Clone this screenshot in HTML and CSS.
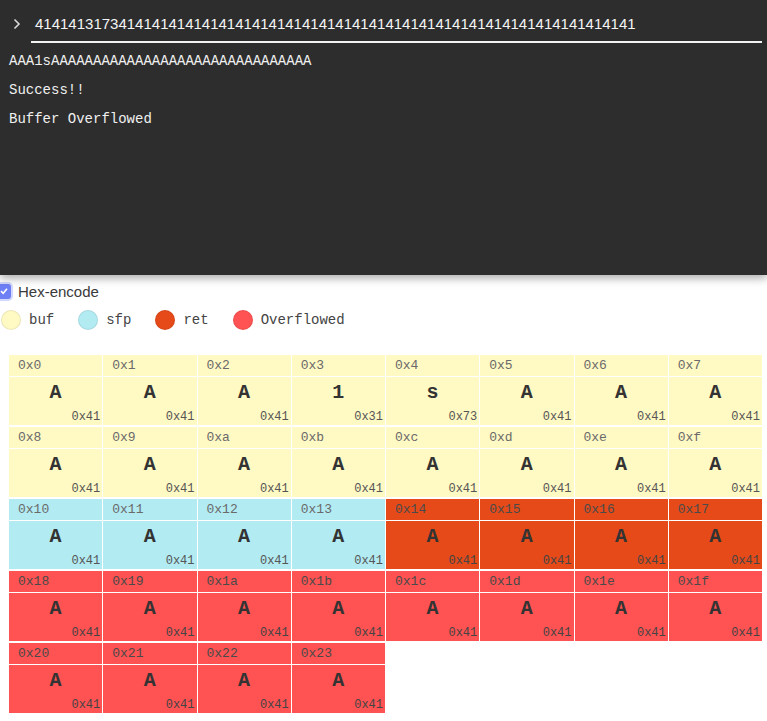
FILE: index.html
```html
<!DOCTYPE html>
<html>
<head>
<meta charset="utf-8">
<link rel="stylesheet" href="styles.css">
</head>
<body>
<div class="terminal">
  <div class="prompt">
    <svg class="chev" width="8" height="12" viewBox="0 0 8 12"><path d="M1.5 1.5 L6 6 L1.5 10.5" fill="none" stroke="#d8d8d8" stroke-width="1.6"/></svg>
    <div class="input">414141317341414141414141414141414141414141414141414141414141414141414141</div>
  </div>
  <p class="out">AAA1sAAAAAAAAAAAAAAAAAAAAAAAAAAAAAAA</p>
  <p class="out">Success!!</p>
  <p class="out">Buffer Overflowed</p>
</div>

<label class="hexrow">
  <span class="check"><svg width="10" height="10" viewBox="0 0 10 10"><path d="M2 5.2 L4.2 7.3 L8 2.8" fill="none" stroke="#fff" stroke-width="1.6"/></svg></span>
  <span class="hexlabel">Hex-encode</span>
</label>

<div class="legend">
  <span class="item"><span class="dot buf"></span>buf</span>
  <span class="item"><span class="dot sfp"></span>sfp</span>
  <span class="item"><span class="dot ret"></span>ret</span>
  <span class="item"><span class="dot ovf"></span>Overflowed</span>
</div>

<div class="grid">
  <div class="cell buf"><div class="addr">0x0</div><div class="val"><span class="ch">A</span><span class="hex">0x41</span></div></div>
  <div class="cell buf"><div class="addr">0x1</div><div class="val"><span class="ch">A</span><span class="hex">0x41</span></div></div>
  <div class="cell buf"><div class="addr">0x2</div><div class="val"><span class="ch">A</span><span class="hex">0x41</span></div></div>
  <div class="cell buf"><div class="addr">0x3</div><div class="val"><span class="ch">1</span><span class="hex">0x31</span></div></div>
  <div class="cell buf"><div class="addr">0x4</div><div class="val"><span class="ch">s</span><span class="hex">0x73</span></div></div>
  <div class="cell buf"><div class="addr">0x5</div><div class="val"><span class="ch">A</span><span class="hex">0x41</span></div></div>
  <div class="cell buf"><div class="addr">0x6</div><div class="val"><span class="ch">A</span><span class="hex">0x41</span></div></div>
  <div class="cell buf"><div class="addr">0x7</div><div class="val"><span class="ch">A</span><span class="hex">0x41</span></div></div>
  <div class="cell buf"><div class="addr">0x8</div><div class="val"><span class="ch">A</span><span class="hex">0x41</span></div></div>
  <div class="cell buf"><div class="addr">0x9</div><div class="val"><span class="ch">A</span><span class="hex">0x41</span></div></div>
  <div class="cell buf"><div class="addr">0xa</div><div class="val"><span class="ch">A</span><span class="hex">0x41</span></div></div>
  <div class="cell buf"><div class="addr">0xb</div><div class="val"><span class="ch">A</span><span class="hex">0x41</span></div></div>
  <div class="cell buf"><div class="addr">0xc</div><div class="val"><span class="ch">A</span><span class="hex">0x41</span></div></div>
  <div class="cell buf"><div class="addr">0xd</div><div class="val"><span class="ch">A</span><span class="hex">0x41</span></div></div>
  <div class="cell buf"><div class="addr">0xe</div><div class="val"><span class="ch">A</span><span class="hex">0x41</span></div></div>
  <div class="cell buf"><div class="addr">0xf</div><div class="val"><span class="ch">A</span><span class="hex">0x41</span></div></div>
  <div class="cell sfp"><div class="addr">0x10</div><div class="val"><span class="ch">A</span><span class="hex">0x41</span></div></div>
  <div class="cell sfp"><div class="addr">0x11</div><div class="val"><span class="ch">A</span><span class="hex">0x41</span></div></div>
  <div class="cell sfp"><div class="addr">0x12</div><div class="val"><span class="ch">A</span><span class="hex">0x41</span></div></div>
  <div class="cell sfp"><div class="addr">0x13</div><div class="val"><span class="ch">A</span><span class="hex">0x41</span></div></div>
  <div class="cell ret"><div class="addr">0x14</div><div class="val"><span class="ch">A</span><span class="hex">0x41</span></div></div>
  <div class="cell ret"><div class="addr">0x15</div><div class="val"><span class="ch">A</span><span class="hex">0x41</span></div></div>
  <div class="cell ret"><div class="addr">0x16</div><div class="val"><span class="ch">A</span><span class="hex">0x41</span></div></div>
  <div class="cell ret"><div class="addr">0x17</div><div class="val"><span class="ch">A</span><span class="hex">0x41</span></div></div>
  <div class="cell ovf"><div class="addr">0x18</div><div class="val"><span class="ch">A</span><span class="hex">0x41</span></div></div>
  <div class="cell ovf"><div class="addr">0x19</div><div class="val"><span class="ch">A</span><span class="hex">0x41</span></div></div>
  <div class="cell ovf"><div class="addr">0x1a</div><div class="val"><span class="ch">A</span><span class="hex">0x41</span></div></div>
  <div class="cell ovf"><div class="addr">0x1b</div><div class="val"><span class="ch">A</span><span class="hex">0x41</span></div></div>
  <div class="cell ovf"><div class="addr">0x1c</div><div class="val"><span class="ch">A</span><span class="hex">0x41</span></div></div>
  <div class="cell ovf"><div class="addr">0x1d</div><div class="val"><span class="ch">A</span><span class="hex">0x41</span></div></div>
  <div class="cell ovf"><div class="addr">0x1e</div><div class="val"><span class="ch">A</span><span class="hex">0x41</span></div></div>
  <div class="cell ovf"><div class="addr">0x1f</div><div class="val"><span class="ch">A</span><span class="hex">0x41</span></div></div>
  <div class="cell ovf"><div class="addr">0x20</div><div class="val"><span class="ch">A</span><span class="hex">0x41</span></div></div>
  <div class="cell ovf"><div class="addr">0x21</div><div class="val"><span class="ch">A</span><span class="hex">0x41</span></div></div>
  <div class="cell ovf"><div class="addr">0x22</div><div class="val"><span class="ch">A</span><span class="hex">0x41</span></div></div>
  <div class="cell ovf"><div class="addr">0x23</div><div class="val"><span class="ch">A</span><span class="hex">0x41</span></div></div>
</div>
</body>
</html>
```

FILE: styles.css
```css
html, body {
  margin: 0;
  padding: 0;
  background: #ffffff;
  overflow: hidden;
}

.terminal {
  background: #2d2d2d;
  height: 275px;
  box-sizing: border-box;
  padding: 0 5px 0 9px;
  box-shadow: 0 3px 9px rgba(0, 0, 0, 0.35);
  position: relative;
  z-index: 1;
}

.prompt {
  display: flex;
  align-items: flex-end;
  padding-left: 4px;
  height: 43px;
}

.chev {
  margin-bottom: 13px;
  flex: none;
}

.input {
  flex: 1;
  margin-left: 10px;
  padding-left: 4px;
  padding-top: 14px;
  box-sizing: border-box;
  height: 43px;
  border-bottom: 2px solid #f2f2f2;
  font-family: "Liberation Sans", Arial, sans-serif;
  font-size: 15px;
  line-height: 20px;
  color: #f4f4f4;
  white-space: nowrap;
  overflow: hidden;
}

.out {
  margin: 10px 0 13px 0;
  font-family: "Liberation Mono", "Courier New", monospace;
  font-size: 14px;
  line-height: 16px;
  color: #f0f0f0;
}

.out + .out {
  margin-top: 0;
}

.hexrow {
  display: flex;
  align-items: center;
  height: 20px;
  margin-top: 6px;
}

.check {
  width: 15px;
  height: 15px;
  margin-left: -4px;
  border-radius: 3px;
  background: #6e7ef4;
  box-shadow: 0 0 0 2px #d3d8fc;
  display: flex;
  align-items: center;
  justify-content: center;
}

.hexlabel {
  margin-left: 7px;
  font-family: "Liberation Sans", Arial, sans-serif;
  font-size: 15px;
  color: #3a3a3a;
}

.legend {
  display: flex;
  align-items: center;
  height: 20px;
  margin-top: 9px;
  padding-left: 1px;
}

.item {
  display: flex;
  align-items: center;
  gap: 8px;
  margin-right: 24px;
  font-family: "Liberation Mono", "Courier New", monospace;
  font-size: 14px;
  color: #444;
}

.dot {
  width: 20px;
  height: 20px;
  border-radius: 50%;
  box-sizing: border-box;
  border: 1px solid rgba(0, 0, 0, 0.08);
}

.dot.buf { background: #fff9c4; }
.dot.sfp { background: #b2ebf2; }
.dot.ret { background: #e64a19; }
.dot.ovf { background: #ff5252; }

.grid {
  display: grid;
  grid-template-columns: repeat(8, 1fr);
  column-gap: 1px;
  row-gap: 2px;
  margin: 25px 5px 0 9px;
}

.cell {
  display: flex;
  flex-direction: column;
  gap: 1px;
}

.addr {
  height: 21px;
  line-height: 21px;
  padding-left: 9px;
  font-family: "Liberation Mono", "Courier New", monospace;
  font-size: 13px;
  color: #6a6a6a;
}

.val {
  height: 48px;
  display: flex;
  flex-direction: column;
  font-family: "Liberation Mono", "Courier New", monospace;
}

.ch {
  margin-top: 4px;
  line-height: 24px;
  font-size: 20px;
  font-weight: bold;
  text-align: center;
  color: #333;
}

.hex {
  margin-top: 5px;
  line-height: 14px;
  font-size: 12px;
  text-align: right;
  padding-right: 2px;
  color: #555;
}

.cell.buf .addr, .cell.buf .val { background: #fff9c4; }
.cell.sfp .addr, .cell.sfp .val { background: #b2ebf2; }
.cell.ret .addr, .cell.ret .val { background: #e64a19; }
.cell.ovf .addr, .cell.ovf .val { background: #ff5252; }

.cell.ret .addr, .cell.ovf .addr { color: #4a4a4a; }
.cell.ret .hex, .cell.ovf .hex { color: #444; }
```
